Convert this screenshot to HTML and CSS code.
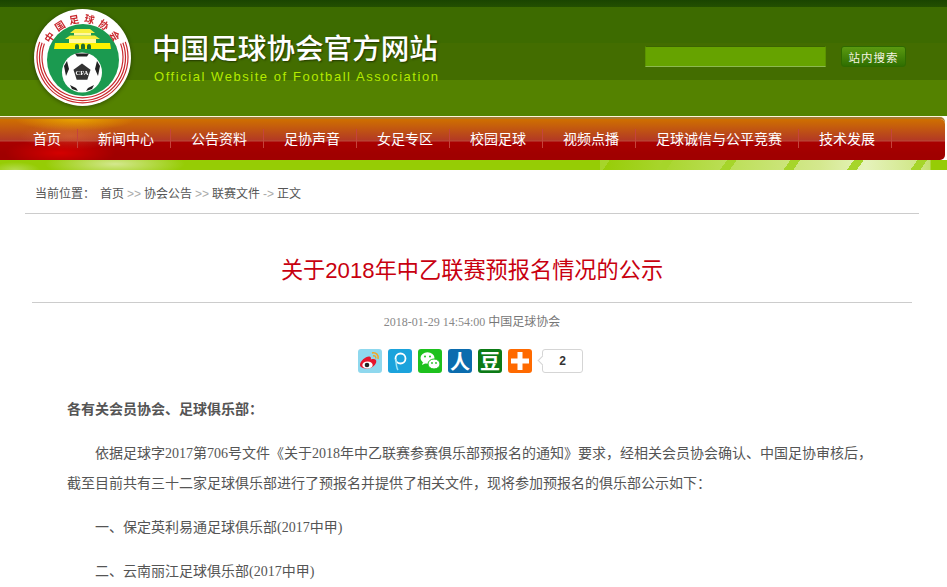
FILE: index.html
```html
<!DOCTYPE html>
<html lang="zh-CN">
<head>
  <meta charset="UTF-8" />
  <title>中国足球协会官方网站</title>
  <link rel="stylesheet" href="styles.css">
</head>
<body>
  <header class="top">
    <svg class="logo" width="100" height="100" viewBox="0 0 100 100">
      <defs>
        <path id="ringText" d="M15.500 49.500 A35 35 0 0 1 85.500 49.500" />
      </defs>
      <circle cx="50.500" cy="49.500" r="48.500" fill="#fff" />
      <g fill="none" stroke="#c9282d" stroke-width="1.200">
        <path d="M7.700 33.900 A45.500 45.500 0 1 0 93.300 33.900" />
        <path d="M10.100 34.800 A43 43 0 1 0 90.900 34.800" />
        <path d="M12.400 35.600 A40.500 40.500 0 1 0 88.600 35.600" />
      </g>
      <circle cx="51" cy="52" r="36" fill="#1b9a50" />
      <text class="logo-ring" font-size="10" fill="#c9282d"><textPath href="#ringText" startOffset="51%" text-anchor="middle">中国足球协会</textPath></text>
      <!-- tiananmen -->
      <path d="M38 25 H63 L58 21 H43 Z M33 31 H68 L63 27.500 H38 Z" fill="#f7ef3c" />
      <path d="M42 25 H59 V27.500 H42 Z M37 31 H64 V35 H37 Z" fill="#fff8a0" />
      <path d="M23 35 H78 L79 41 H22 Z" fill="#fff200" />
      <path d="M43 41 V38 A2 2 0 0 1 47 38 V41 Z M49 41 V37.500 A2 2 0 0 1 53 37.500 V41 Z M55 41 V38 A2 2 0 0 1 59 38 V41 Z" fill="#1d6b30" />
      <!-- ball -->
      <circle cx="50" cy="64.500" r="20" fill="#fff" />
      <path d="M43 45.500 H57 L55 48.500 H45 Z M32 58 L35 53 L37 61 L34 68 Z M68 58 L65 53 L63 61 L66 68 Z M38 77 L44 80 L46 83 L40 81 Z M62 77 L56 80 L54 83 L60 81 Z" fill="#222" />
      <path d="M50 55.500 L58.500 61.700 L55.300 71.800 H44.700 L41.500 61.700 Z" fill="#333" />
      <text class="logo-cfa" x="50" y="67" font-size="6.500" fill="#fff" text-anchor="middle">CFA</text>
    </svg>
    <div class="site-name">
      <h1>中国足球协会官方网站</h1>
      <p>Official Website of Football Association</p>
    </div>
    <form class="search">
      <input type="text" class="search-box" />
      <button type="button" class="search-btn">站内搜索</button>
    </form>
  </header>

  <nav class="menu">
    <a href="#">首页</a>
    <a href="#">新闻中心</a>
    <a href="#">公告资料</a>
    <a href="#">足协声音</a>
    <a href="#">女足专区</a>
    <a href="#">校园足球</a>
    <a href="#">视频点播</a>
    <a href="#">足球诚信与公平竞赛</a>
    <a href="#">技术发展</a>
  </nav>
  <div class="strip"></div>

  <div class="crumbs">
    <span class="crumbs-label">当前位置：</span>首页<i>&gt;&gt;</i>协会公告<i>&gt;&gt;</i>联赛文件<i>-&gt;</i>正文
  </div>

  <main class="article">
    <h2>关于2018年中乙联赛预报名情况的公示</h2>
    <div class="meta"><span class="meta-date">2018-01-29 14:54:00</span> 中国足球协会</div>

    <div class="share">
      <svg width="24" height="24" viewBox="0 0 24 24">
        <rect width="24" height="24" rx="3" fill="#8fd8ee" />
        <path d="M2 16c0-4 6-9 9.500-8.500 1.500.3 1.800 1.800 1.300 3 3-1 6.200-.5 5.400 2.700-1 3.600-5 6.300-9.200 6.300S2 18 2 16z" fill="#e6162d" />
        <ellipse cx="9.500" cy="16" rx="5.200" ry="3.600" fill="#fff" />
        <circle cx="9" cy="16" r="2.300" fill="#222" />
        <path d="M14 4c4-1 7 2 6 6M15 7c2-.5 3 .5 2.800 2.500" fill="none" stroke="#f5a623" stroke-width="1.500" />
      </svg>
      <svg width="24" height="24" viewBox="0 0 24 24">
        <rect width="24" height="24" rx="3" fill="#1ba3dc" />
        <circle cx="12.500" cy="9.500" r="5" fill="none" stroke="#fff" stroke-width="1.800" />
        <path d="M8 10c0 4 0 8 2 11" fill="none" stroke="#9fe3f5" stroke-width="1.500" />
      </svg>
      <svg width="24" height="24" viewBox="0 0 24 24">
        <rect width="24" height="24" rx="3" fill="#1ec11e" />
        <ellipse cx="9.500" cy="9" rx="7" ry="5.800" fill="#fff" />
        <path d="M5 13l-1 3 4-2z" fill="#fff" />
        <ellipse cx="16" cy="15" rx="6" ry="5" fill="#fff" stroke="#1ec11e" />
        <circle cx="7" cy="7.500" r="1" fill="#1ec11e" />
        <circle cx="12" cy="7.500" r="1" fill="#1ec11e" />
        <circle cx="14" cy="14" r=".9" fill="#1ec11e" />
        <circle cx="18" cy="14" r=".9" fill="#1ec11e" />
      </svg>
      <svg width="24" height="24" viewBox="0 0 24 24">
        <rect width="24" height="24" rx="3" fill="#0b6cae" />
        <text class="share-glyph" x="12" y="19.500" font-size="20" fill="#fff" text-anchor="middle">人</text>
      </svg>
      <svg width="24" height="24" viewBox="0 0 24 24">
        <rect width="24" height="24" rx="3" fill="#0c7a16" />
        <text class="share-glyph" x="12" y="19.500" font-size="20" fill="#fff" text-anchor="middle">豆</text>
      </svg>
      <svg width="24" height="24" viewBox="0 0 24 24">
        <rect width="24" height="24" rx="3" fill="#ff6a00" />
        <path d="M9.500 3h5v6.500H21v5h-6.500V21h-5v-6.500H3v-5h6.500z" fill="#fff" />
      </svg>
      <span class="share-count">2</span>
    </div>

    <div class="body">
      <p><strong>各有关会员协会、足球俱乐部：</strong></p>
      <p class="indent">依据足球字2017第706号文件《关于2018年中乙联赛参赛俱乐部预报名的通知》要求，经相关会员协会确认、中国足协审核后，截至目前共有三十二家足球俱乐部进行了预报名并提供了相关文件，现将参加预报名的俱乐部公示如下：</p>
      <p class="indent">一、保定英利易通足球俱乐部(2017中甲)</p>
      <p class="indent">二、云南丽江足球俱乐部(2017中甲)</p>
    </div>
  </main>
</body>
</html>
```

FILE: styles.css
```css
html,
body {
  margin: 0;
  padding: 0;
  background: #fff;
}
body {
  font-family: "Liberation Serif", "Noto Sans CJK SC", serif;
  font-size: 14px;
  color: #555;
}
.top {
  height: 116px;
  display: flex;
  background: linear-gradient(#1a4500 0, #234f00 7px, #3d6b00 7px, #3d6b00 43px, #436d00 43px, #436d00 80px, #548200 80px);
}
.logo {
  margin: 8px 0 0 32px;
  overflow: visible;
  filter: drop-shadow(0 1px 2px rgba(0, 0, 0, 0.4));
}
.logo-ring {
  font-family: "Noto Sans CJK SC", sans-serif;
  font-weight: 700;
  letter-spacing: 4px;
}
.logo-cfa {
  font-family: "Liberation Serif", serif;
  font-weight: 700;
}
.site-name {
  margin-left: 20px;
}
.site-name h1 {
  margin: 27px 0 0;
  font-family: "Noto Sans CJK SC", sans-serif;
  font-size: 28.600px;
  line-height: 40px;
  font-weight: 500;
  color: #fff;
  text-shadow: 1px 1px 2px rgba(0, 0, 0, 0.5);
}
.site-name p {
  margin: 2px 0 0 2px;
  font-family: "Liberation Sans", sans-serif;
  font-size: 13px;
  line-height: 16px;
  letter-spacing: 1.550px;
  color: #b4ea00;
}
.search {
  margin: 46px 0 0 auto;
  padding-right: 41px;
  display: flex;
  gap: 15px;
  height: 21px;
}
.search-box {
  width: 181px;
  height: 21px;
  box-sizing: border-box;
  padding: 0;
  background: #66a300;
  border: 1px solid #5b9300;
  border-top-color: #3c6500;
  border-bottom-color: #8db850;
  outline: 0;
}
.search-btn {
  width: 65px;
  height: 21px;
  padding: 0;
  border: 1px solid #2f6a00;
  border-radius: 3px;
  background: linear-gradient(#5a9a10, #2f6e00);
  font-family: "Noto Sans CJK SC", sans-serif;
  font-size: 11.500px;
  letter-spacing: 1px;
  color: #f4f4e0;
}
.menu {
  display: flex;
  height: 41px;
  margin: 3px 2px 0 0;
  padding-left: 13px;
  border-radius: 0 5px 5px 0;
  background:
    radial-gradient(ellipse 55px 14px at 60px 34px, rgba(225, 0, 0, 0.8), transparent),
    radial-gradient(ellipse 60px 12px at 75px 0, rgba(240, 180, 0, 0.75), transparent),
    radial-gradient(ellipse 50px 14px at 70px 17px, rgba(230, 120, 70, 0.45), transparent),
    linear-gradient(#cf7000 0, #b33a24 21px, #bb4a3e 22px, #a90000 23px, #a00000 35px);
  box-shadow: 0 -2px 0 #a87a30, 0 -3px 0 #fdf6dc;
}
.menu a {
  padding: 0 16px 0 20px;
  height: 19px;
  margin-top: 10px;
  line-height: 19px;
  font-family: "Noto Sans CJK SC", sans-serif;
  font-size: 14px;
  color: #fff;
  text-decoration: none;
  border-right: 1px solid #c4443c;
}
.strip {
  height: 10px;
  background:
    repeating-linear-gradient(125deg, #a6d52a 0, #a6d52a 8px, transparent 8px, transparent 52px) 600px 0 / 330px 10px no-repeat,
    linear-gradient(90deg, #96cc05 0, #bcdf58 130px, #d4e88e 220px, #e6f3bc 265px, #cfe685 320px, #c4e070 330px, #96cc05 331px) 600px 0 / 347px 10px no-repeat,
    radial-gradient(ellipse 70px 14px at 115px 4px, #d4e88e, transparent),
    radial-gradient(ellipse 25px 8px at 15px 10px, #b6dc50, transparent),
    #96cc05;
}
.crumbs {
  height: 43px;
  margin: 0 28px 0 25px;
  padding-left: 10px;
  border-bottom: 1px solid #ccc;
  font-family: "Noto Sans CJK SC", sans-serif;
  font-size: 12px;
  line-height: 46px;
  color: #555;
}
.crumbs-label {
  margin-right: 5px;
}
.crumbs i {
  margin: 0 3px;
  font-family: "Liberation Sans", sans-serif;
  font-style: normal;
  color: #aaa;
}
.article {
  margin: 0 35px 0 32px;
}
.article h2 {
  margin: 0;
  height: 89px;
  box-sizing: border-box;
  padding-top: 41px;
  border-bottom: 1px solid #ccc;
  font-family: "Liberation Sans", "Noto Sans CJK SC", sans-serif;
  font-size: 22.200px;
  line-height: 32px;
  font-weight: 400;
  text-align: center;
  color: #c8000f;
}
.meta {
  margin-top: 9px;
  line-height: 20px;
  font-size: 12px;
  text-align: center;
  color: #777;
}
.meta-date {
  color: #888;
}
.share {
  display: flex;
  align-items: center;
  gap: 6px;
  margin-top: 17px;
  padding-left: 326px;
  height: 24px;
}
.share svg {
  flex: none;
  overflow: visible;
}
.share-glyph {
  font-family: "Noto Sans CJK SC", sans-serif;
  font-weight: 700;
}
.share-count {
  position: relative;
  margin-left: 4px;
  width: 39px;
  height: 22px;
  border: 1px solid #d5d5d5;
  border-radius: 3px;
  font-family: "Liberation Sans", sans-serif;
  font-size: 12px;
  font-weight: 700;
  line-height: 23px;
  text-align: center;
  color: #333;
}
.share-count::before {
  content: "";
  position: absolute;
  left: -4px;
  top: 7px;
  width: 6px;
  height: 6px;
  background: #fff;
  border-left: 1px solid #d5d5d5;
  border-bottom: 1px solid #d5d5d5;
  transform: rotate(45deg);
}
.body {
  margin: 22px 38px 0 35px;
}
.body p {
  margin: 0 0 14px;
  line-height: 30px;
}
.body .indent {
  text-indent: 28px;
}
```
